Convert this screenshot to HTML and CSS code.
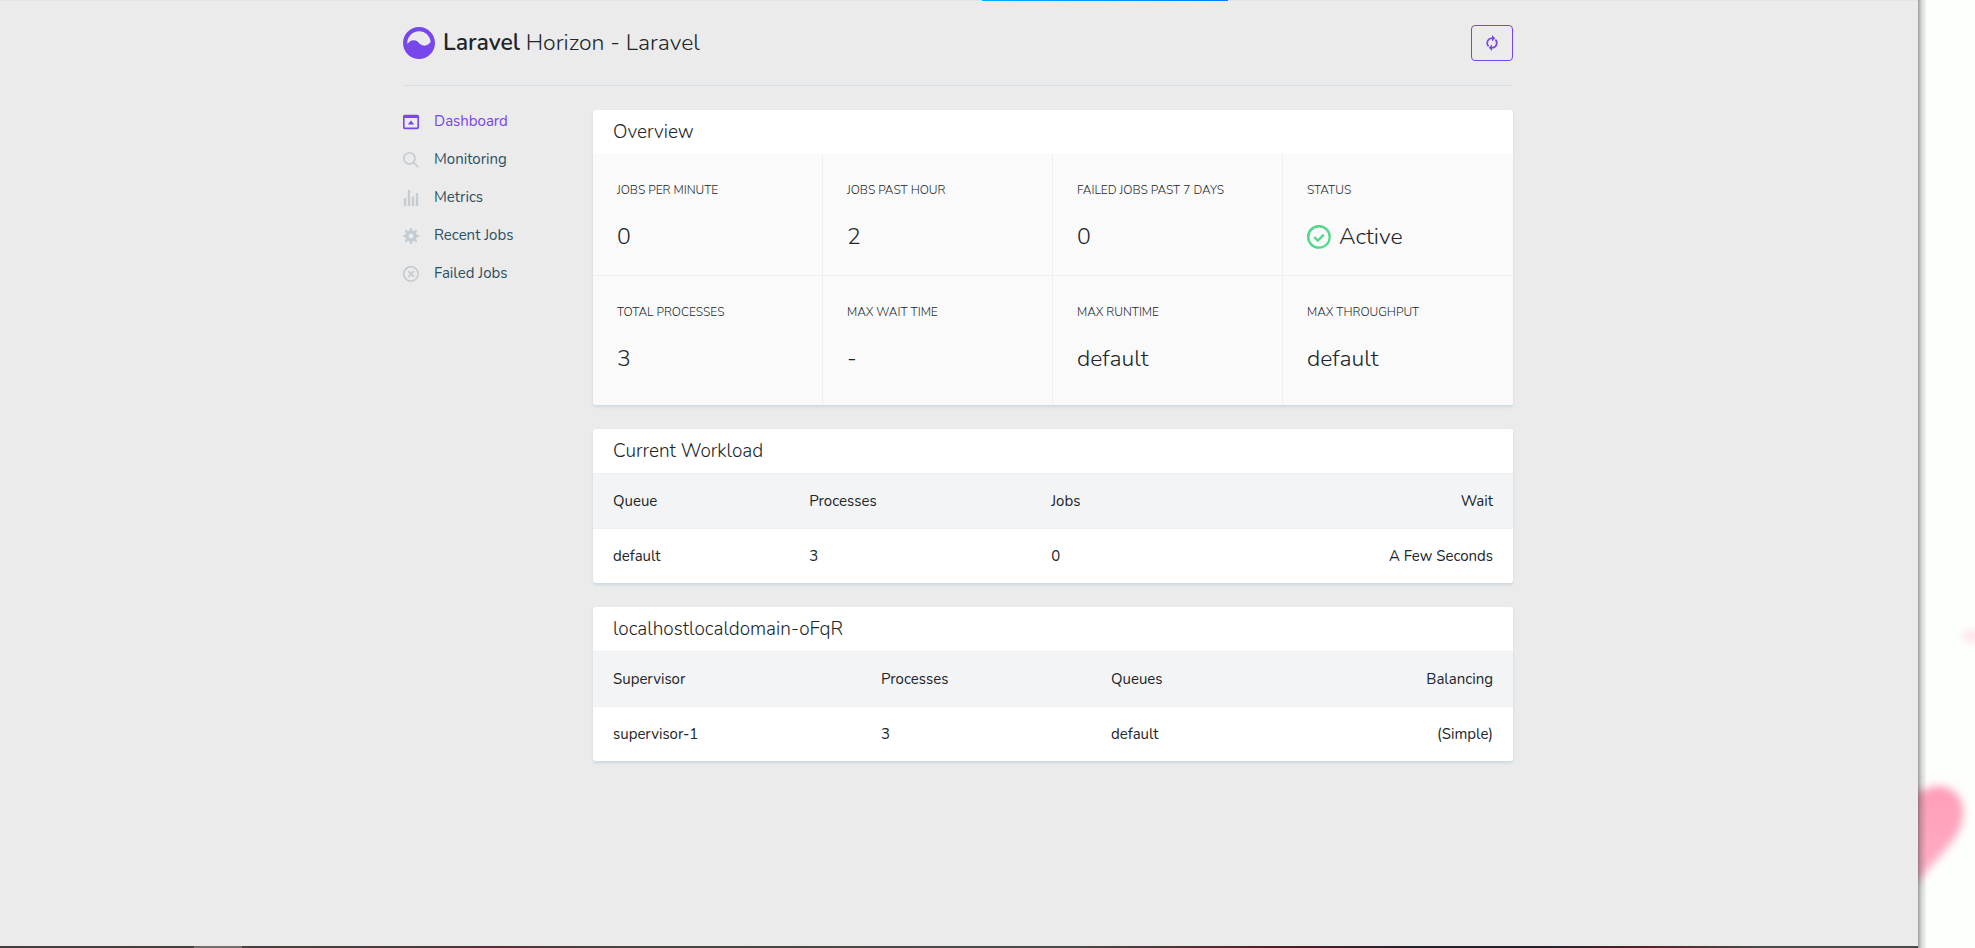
FILE: index.html
```html
<!DOCTYPE html>
<html lang="en">
<head>
<meta charset="utf-8">
<meta name="viewport" content="width=device-width, initial-scale=1">
<title>Horizon - Laravel</title>
<link rel="stylesheet" href="styles.css">
</head>
<body>
<div class="desktop">
  <div class="window">
    <div class="page">
      <div class="load-bar"></div>
      <div class="container">
        <header class="header">
          <svg class="logo" viewBox="0 0 30 30" aria-hidden="true"><path d="M5.26176342 26.4094389C2.04147988 23.6582233 0 19.5675182 0 15c0-4.1421356 1.67893219-7.89213562 4.39339828-10.60660172C7.10786438 1.67893219 10.8578644 0 15 0c8.2842712 0 15 6.71572875 15 15 0 8.2842712-6.7157288 15-15 15-3.716753 0-7.11777662-1.3517984-9.73823658-3.5905611zM4.03811305 15.9222506C5.70084247 14.4569342 6.87195416 12.5 10 12.5c5 0 5 5 10 5 3.1280454 0 4.2991572-1.9569336 5.961887-3.4222502C25.4934253 8.43417206 20.7645408 4 15 4 8.92486775 4 4 8.92486775 4 15c0 .3105915.01287248.6181765.03811305.9222506z"/></svg>
          <h1 class="title"><strong>Laravel</strong> Horizon - Laravel</h1>
          <button class="refresh" type="button" aria-label="Auto load new entries"><svg viewBox="0 0 20 20" aria-hidden="true"><path d="M10 3v2a5 5 0 0 0-3.54 8.54l-1.41 1.41A7 7 0 0 1 10 3zm4.95 2.05A7 7 0 0 1 10 17v-2a5 5 0 0 0 3.54-8.54l1.41-1.41zM10 20l-4-4 4-4v8zm0-12V0l4 4-4 4z"/></svg></button>
        </header>
        <div class="columns">
          <nav class="sidebar">
            <a class="nav-link active" href="#dashboard"><svg viewBox="0 0 20 20" aria-hidden="true"><path d="M0 3c0-1.1.9-2 2-2h16a2 2 0 0 1 2 2v14a2 2 0 0 1-2 2H2a2 2 0 0 1-2-2V3zm2 2v12h16V5H2zm8 3l4 5H6l4-5z"/></svg><span>Dashboard</span></a>
            <a class="nav-link" href="#monitoring"><svg viewBox="0 0 20 20" aria-hidden="true"><path d="M12.9 14.32a8 8 0 1 1 1.41-1.41l5.35 5.33-1.42 1.42-5.33-5.34zM8 14A6 6 0 1 0 8 2a6 6 0 0 0 0 12z"/></svg><span>Monitoring</span></a>
            <a class="nav-link" href="#metrics"><svg viewBox="0 0 20 20" aria-hidden="true"><path d="M1 10h3v10H1V10zM6 0h3v20H6V0zm5 8h3v12h-3V8zm5-4h3v16h-3V4z"/></svg><span>Metrics</span></a>
            <a class="nav-link" href="#recent"><svg viewBox="0 0 20 20" aria-hidden="true"><path d="M3.94 6.5L2.22 3.64l1.42-1.42L6.5 3.94c.52-.3 1.1-.54 1.7-.7L9 0h2l.8 3.24c.6.16 1.18.4 1.7.7l2.86-1.72 1.42 1.42-1.72 2.86c.3.52.54 1.1.7 1.7L20 9v2l-3.24.8c-.16.6-.4 1.18-.7 1.7l1.72 2.86-1.42 1.42-2.86-1.72c-.52.3-1.1.54-1.7.7L11 20H9l-.8-3.24c-.6-.16-1.18-.4-1.7-.7l-2.86 1.72-1.42-1.42 1.72-2.86c-.3-.52-.54-1.1-.7-1.7L0 11V9l3.24-.8c.16-.6.4-1.18.7-1.7zM10 13a3 3 0 1 0 0-6 3 3 0 0 0 0 6z"/></svg><span>Recent Jobs</span></a>
            <a class="nav-link" href="#failed"><svg viewBox="0 0 20 20" aria-hidden="true"><path d="M2.93 17.07A10 10 0 1 1 17.07 2.93 10 10 0 0 1 2.93 17.07zm1.41-1.41A8 8 0 1 0 15.66 4.34 8 8 0 0 0 4.34 15.66zm9.9-8.49L11.41 10l2.83 2.83-1.41 1.41L10 11.41l-2.83 2.83-1.41-1.41L8.59 10 5.76 7.17l1.41-1.41L10 8.59l2.83-2.83 1.41 1.41z"/></svg><span>Failed Jobs</span></a>
          </nav>
          <main class="content">
            <section class="card">
              <h2 class="card-title">Overview</h2>
              <dl class="stats">
                <div class="stat"><dt>Jobs Per Minute</dt><dd>0</dd></div>
                <div class="stat"><dt>Jobs Past Hour</dt><dd>2</dd></div>
                <div class="stat"><dt>Failed Jobs Past 7 Days</dt><dd>0</dd></div>
                <div class="stat"><dt>Status</dt><dd><svg class="status-icon" viewBox="0 0 20 20" aria-hidden="true"><path d="M2.93 17.07A10 10 0 1 1 17.07 2.93 10 10 0 0 1 2.93 17.07zm1.41-1.41A8 8 0 1 0 15.66 4.34 8 8 0 0 0 4.34 15.66zM6.7 9.29L9 11.6l4.3-4.3 1.4 1.42L9 14.4l-3.7-3.7 1.4-1.42z"/></svg>Active</dd></div>
                <div class="stat"><dt>Total Processes</dt><dd>3</dd></div>
                <div class="stat"><dt>Max Wait Time</dt><dd>-</dd></div>
                <div class="stat"><dt>Max Runtime</dt><dd>default</dd></div>
                <div class="stat"><dt>Max Throughput</dt><dd>default</dd></div>
              </dl>
            </section>
            <section class="card">
              <h2 class="card-title">Current Workload</h2>
              <table class="table workload">
                <thead><tr><th>Queue</th><th>Processes</th><th>Jobs</th><th>Wait</th></tr></thead>
                <tbody><tr><td>default</td><td>3</td><td>0</td><td>A Few Seconds</td></tr></tbody>
              </table>
            </section>
            <section class="card">
              <h2 class="card-title">localhostlocaldomain-oFqR</h2>
              <table class="table supervisors">
                <thead><tr><th>Supervisor</th><th>Processes</th><th>Queues</th><th>Balancing</th></tr></thead>
                <tbody><tr><td>supervisor-1</td><td>3</td><td>default</td><td>(Simple)</td></tr></tbody>
              </table>
            </section>
          </main>
        </div>
      </div>
    </div>
    <div class="taskbar"></div>
  </div>
  <div class="wallpaper">
    <svg class="hearts" viewBox="0 0 57 348" aria-hidden="true">
      <defs>
        <filter id="soft" x="-50%" y="-50%" width="200%" height="200%"><feGaussianBlur stdDeviation="4"/></filter>
        <linearGradient id="pink" x1="0" y1="0" x2="0" y2="1"><stop offset="0" stop-color="#ff9db8"/><stop offset="1" stop-color="#ffb0c6"/></linearGradient>
      </defs>
      <path d="M-24 206C-20 184-4 184 2 193C14 182 36 184 43 201C49 216 42 234 28 249L-4 286L-34 240Z" fill="url(#pink)" filter="url(#soft)"/>
      <path d="M44 34C49 30 55 31 59 32V44C53 42 48 40 44 34Z" fill="#ffdbe5" filter="url(#soft)"/>
    </svg>
  </div>
</div>
</body>
</html>
```
FILE: styles.css
```css
* {
  box-sizing: border-box;
}

body {
  margin: 0;
  background: #fdfffd;
  color: #212529;
  font-family: Nunito, Lato, "Liberation Sans", sans-serif;
  font-size: 15px;
  font-weight: 400;
  line-height: 23px;
}

h1, h2, dl, dd {
  margin: 0;
  font-weight: 300;
}

.desktop {
  display: flex;
  min-height: 100vh;
}

.window {
  flex: 1;
  display: flex;
  flex-direction: column;
}

.page {
  position: relative;
  flex: 1;
  padding: 0 26px 24px 24px;
  background: #ebebeb;
}

.load-bar {
  position: absolute;
  top: 0;
  left: 0;
  width: 100%;
  height: 1px;
  background: linear-gradient(90deg, #00b0ff, #007bff) 982px 0 / 246px 1px no-repeat #e5e5e5;
}

.taskbar {
  height: 2px;
  background:
    linear-gradient(#756c6c, #756c6c) 194px 0 / 48px 2px no-repeat,
    linear-gradient(90deg, #443c40, #4a403e 16%, #4a3a3c 22%, #5a2c36 26%, #4a4444 32%, #4a4a4a 56%, #5a1c24 66%, #26202e 74%, #26202e 80%, #5a2028 86%, #4a4a4a 92%, #4a4a4a);
}

.wallpaper {
  position: relative;
  width: 57px;
  overflow: hidden;
  background: #fdfffd;
}

.wallpaper::after {
  content: "";
  position: absolute;
  top: 0;
  bottom: 0;
  left: 0;
  width: 9px;
  background: linear-gradient(90deg, rgba(70, 80, 70, .55), rgba(70, 80, 70, .25) 35%, rgba(70, 80, 70, 0));
}

.hearts {
  position: absolute;
  left: 0;
  bottom: 0;
  width: 57px;
  height: 348px;
}

.container {
  max-width: 1110px;
  margin: 0 auto;
}

.header {
  display: flex;
  align-items: center;
  gap: 8px;
  padding: 25px 0 24px;
  border-bottom: 1px solid #d5dfe9;
}

.logo {
  width: 32px;
  height: 32px;
  fill: #7746ec;
}

.title {
  font-size: 23px;
  line-height: 36px;
}

.title strong {
  font-weight: 600;
}

.refresh {
  display: flex;
  align-items: center;
  justify-content: center;
  width: 42px;
  height: 36px;
  margin-left: auto;
  padding: 0;
  border: 1px solid #7746ec;
  border-radius: 4px;
  background: transparent;
}

.refresh svg {
  width: 16px;
  height: 16px;
  fill: #7746ec;
}

.columns {
  display: grid;
  grid-template-columns: 160px minmax(0, 1fr);
  column-gap: 30px;
  padding-top: 24px;
}

.nav-link {
  display: flex;
  align-items: center;
  gap: 15px;
  margin-bottom: 15px;
  color: #2a5164;
  text-decoration: none;
}

.nav-link svg {
  width: 16px;
  height: 16px;
  fill: #c3cbd3;
}

.nav-link.active {
  color: #7746ec;
}

.nav-link.active svg {
  fill: #7746ec;
}

.content {
  display: grid;
  gap: 24px;
}

.card {
  overflow: hidden;
  border-radius: 3px;
  background: #fff;
  box-shadow: 0 2px 3px #cdd8df;
}

.card-title {
  padding: 10px 20px;
  font-size: 19px;
  line-height: 24px;
}

.stats {
  display: grid;
  grid-template-columns: repeat(4, 1fr);
  background: #fafafa;
}

.stat {
  padding: 24px 23px 20px 24px;
  border-right: 1px solid #efefef;
  border-bottom: 1px solid #efefef;
}

.stat:nth-child(4n) {
  border-right: 0;
}

.stat:nth-child(n + 5) {
  padding-bottom: 28px;
  border-bottom: 0;
}

.stat dt {
  font-size: 12px;
  line-height: 24px;
  text-transform: uppercase;
}

.stat dd {
  display: flex;
  align-items: center;
  gap: 8px;
  margin-top: 17px;
  font-size: 23px;
  line-height: 36px;
}

.status-icon {
  width: 24px;
  height: 24px;
  fill: #51d88a;
}

.table {
  width: 100%;
  border-collapse: collapse;
  table-layout: fixed;
}

.table th,
.table td {
  padding: 16px 12px 15px;
  border-top: 1px solid #efefef;
  font-weight: 400;
  text-align: left;
}

.table th {
  background: #f3f4f6;
}

.table th:first-child,
.table td:first-child {
  padding-left: 20px;
}

.table th:last-child,
.table td:last-child {
  padding-right: 20px;
  text-align: right;
}

.workload th:nth-child(1) {
  width: 22.2%;
}

.workload th:nth-child(2) {
  width: 26.3%;
}

.supervisors th:nth-child(1) {
  width: 30%;
}

.supervisors th:nth-child(2) {
  width: 25%;
}
```
